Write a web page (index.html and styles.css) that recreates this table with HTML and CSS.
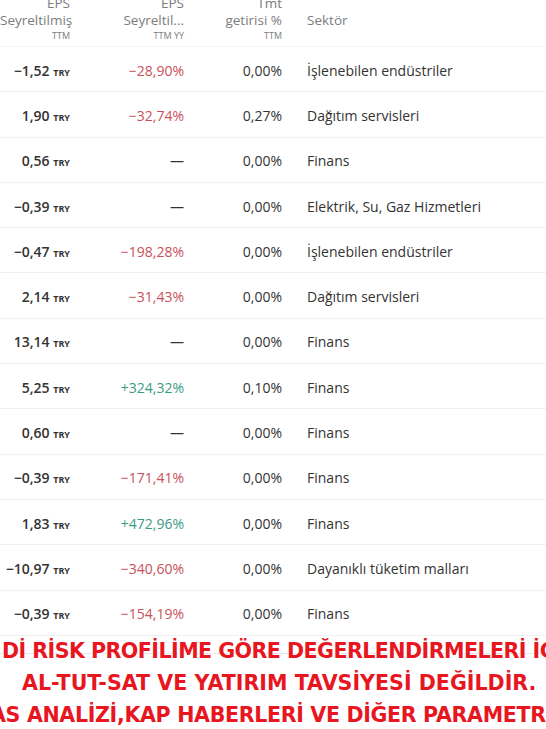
FILE: index.html
```html
<!DOCTYPE html>
<html lang="tr">
<head>
  <meta charset="UTF-8" />
  <meta name="viewport" content="width=device-width, initial-scale=1.0" />
  <title>Hisse Tablosu</title>
  <link rel="stylesheet" href="styles.css">
</head>
<body>
  <div class="table">
    <div class="row head">
      <div class="cell num">EPS<br>Seyreltilmiş<br><span class="sub">TTM</span></div>
      <div class="cell num">EPS<br>Seyreltil...<br><span class="sub">TTM YY</span></div>
      <div class="cell num">Tmt<br>getirisi %<br><span class="sub">TTM</span></div>
      <div class="cell sector">Sektör</div>
    </div>

    <div class="row">
      <div class="cell num strong">−1,52 <span class="cur">TRY</span></div>
      <div class="cell num neg">−28,90%</div>
      <div class="cell num">0,00%</div>
      <div class="cell sector">İşlenebilen endüstriler</div>
    </div>
    <div class="row">
      <div class="cell num strong">1,90 <span class="cur">TRY</span></div>
      <div class="cell num neg">−32,74%</div>
      <div class="cell num">0,27%</div>
      <div class="cell sector">Dağıtım servisleri</div>
    </div>
    <div class="row">
      <div class="cell num strong">0,56 <span class="cur">TRY</span></div>
      <div class="cell num">—</div>
      <div class="cell num">0,00%</div>
      <div class="cell sector">Finans</div>
    </div>
    <div class="row">
      <div class="cell num strong">−0,39 <span class="cur">TRY</span></div>
      <div class="cell num">—</div>
      <div class="cell num">0,00%</div>
      <div class="cell sector">Elektrik, Su, Gaz Hizmetleri</div>
    </div>
    <div class="row">
      <div class="cell num strong">−0,47 <span class="cur">TRY</span></div>
      <div class="cell num neg">−198,28%</div>
      <div class="cell num">0,00%</div>
      <div class="cell sector">İşlenebilen endüstriler</div>
    </div>
    <div class="row">
      <div class="cell num strong">2,14 <span class="cur">TRY</span></div>
      <div class="cell num neg">−31,43%</div>
      <div class="cell num">0,00%</div>
      <div class="cell sector">Dağıtım servisleri</div>
    </div>
    <div class="row">
      <div class="cell num strong">13,14 <span class="cur">TRY</span></div>
      <div class="cell num">—</div>
      <div class="cell num">0,00%</div>
      <div class="cell sector">Finans</div>
    </div>
    <div class="row">
      <div class="cell num strong">5,25 <span class="cur">TRY</span></div>
      <div class="cell num pos">+324,32%</div>
      <div class="cell num">0,10%</div>
      <div class="cell sector">Finans</div>
    </div>
    <div class="row">
      <div class="cell num strong">0,60 <span class="cur">TRY</span></div>
      <div class="cell num">—</div>
      <div class="cell num">0,00%</div>
      <div class="cell sector">Finans</div>
    </div>
    <div class="row">
      <div class="cell num strong">−0,39 <span class="cur">TRY</span></div>
      <div class="cell num neg">−171,41%</div>
      <div class="cell num">0,00%</div>
      <div class="cell sector">Finans</div>
    </div>
    <div class="row">
      <div class="cell num strong">1,83 <span class="cur">TRY</span></div>
      <div class="cell num pos">+472,96%</div>
      <div class="cell num">0,00%</div>
      <div class="cell sector">Finans</div>
    </div>
    <div class="row">
      <div class="cell num strong">−10,97 <span class="cur">TRY</span></div>
      <div class="cell num neg">−340,60%</div>
      <div class="cell num">0,00%</div>
      <div class="cell sector">Dayanıklı tüketim malları</div>
    </div>
    <div class="row">
      <div class="cell num strong">−0,39 <span class="cur">TRY</span></div>
      <div class="cell num neg">−154,19%</div>
      <div class="cell num">0,00%</div>
      <div class="cell sector">Finans</div>
    </div>
  </div>

  <div class="notice">
    <div class="line first">Dİ RİSK PROFİLİME GÖRE DEĞERLENDİRMELERİ İÇERİR</div>
    <div class="line center">AL-TUT-SAT VE YATIRIM TAVSİYESİ DEĞİLDİR.</div>
    <div class="line last">AS ANALİZİ,KAP HABERLERİ VE DİĞER PARAMETRELER</div>
  </div>
</body>
</html>
```

FILE: styles.css
```css
:root {
  --text: #333333;
  --muted: #7c7c7c;
  --neg: #c9515b;
  --pos: #3b9a86;
  --line: #f1f1f1;
  --alert: #e8161f;
}

* {
  margin: 0;
  padding: 0;
  box-sizing: border-box;
}

body {
  background: #fff;
  color: var(--text);
  font-family: 'Open Sans', sans-serif;
  width: 546px;
  height: 729px;
  overflow: hidden;
}

.table {
  font-size: 14px;
}

.row {
  display: grid;
  grid-template-columns: 70px 114px 98px 1fr;
  align-items: center;
  height: 45.3px;
  padding-top: 2px;
  border-bottom: 1px solid var(--line);
}

.row.head {
  height: 53px;
  padding-top: 0;
  margin-top: -6px;
  font-size: 13.5px;
  color: var(--muted);
  line-height: 17px;
  border-bottom-color: #f4f4f4;
}

.cell.num {
  text-align: right;
  white-space: nowrap;
}

.cell.sector {
  padding-left: 25px;
  white-space: nowrap;
}

.head .sub {
  font-size: 9px;
  line-height: 14px;
  display: inline-block;
  vertical-align: top;
}

.strong {
  font-weight: 600;
}

.cur {
  font-size: 9px;
  font-weight: 700;
}

.neg {
  color: var(--neg);
}

.pos {
  color: var(--pos);
}

.notice {
  margin-top: -1px;
  font-family: 'DejaVu Sans', sans-serif;
  font-weight: 700;
  font-size: 20.6px;
  line-height: 32px;
  color: var(--alert);
  text-shadow: 0 0 2px #fff, 0 0 1px #fff;
}

.notice .line {
  white-space: nowrap;
  overflow: hidden;
  padding-left: 2px;
}

.notice .first {
  letter-spacing: -0.55px;
  background: linear-gradient(transparent 18px, #e6e6e6 18px, #e6e6e6 19px, transparent 19px);
}

.notice .center {
  padding-left: 22px;
}

.notice .last {
  padding-left: 0;
  letter-spacing: -0.35px;
  text-indent: -10px;
}
```
